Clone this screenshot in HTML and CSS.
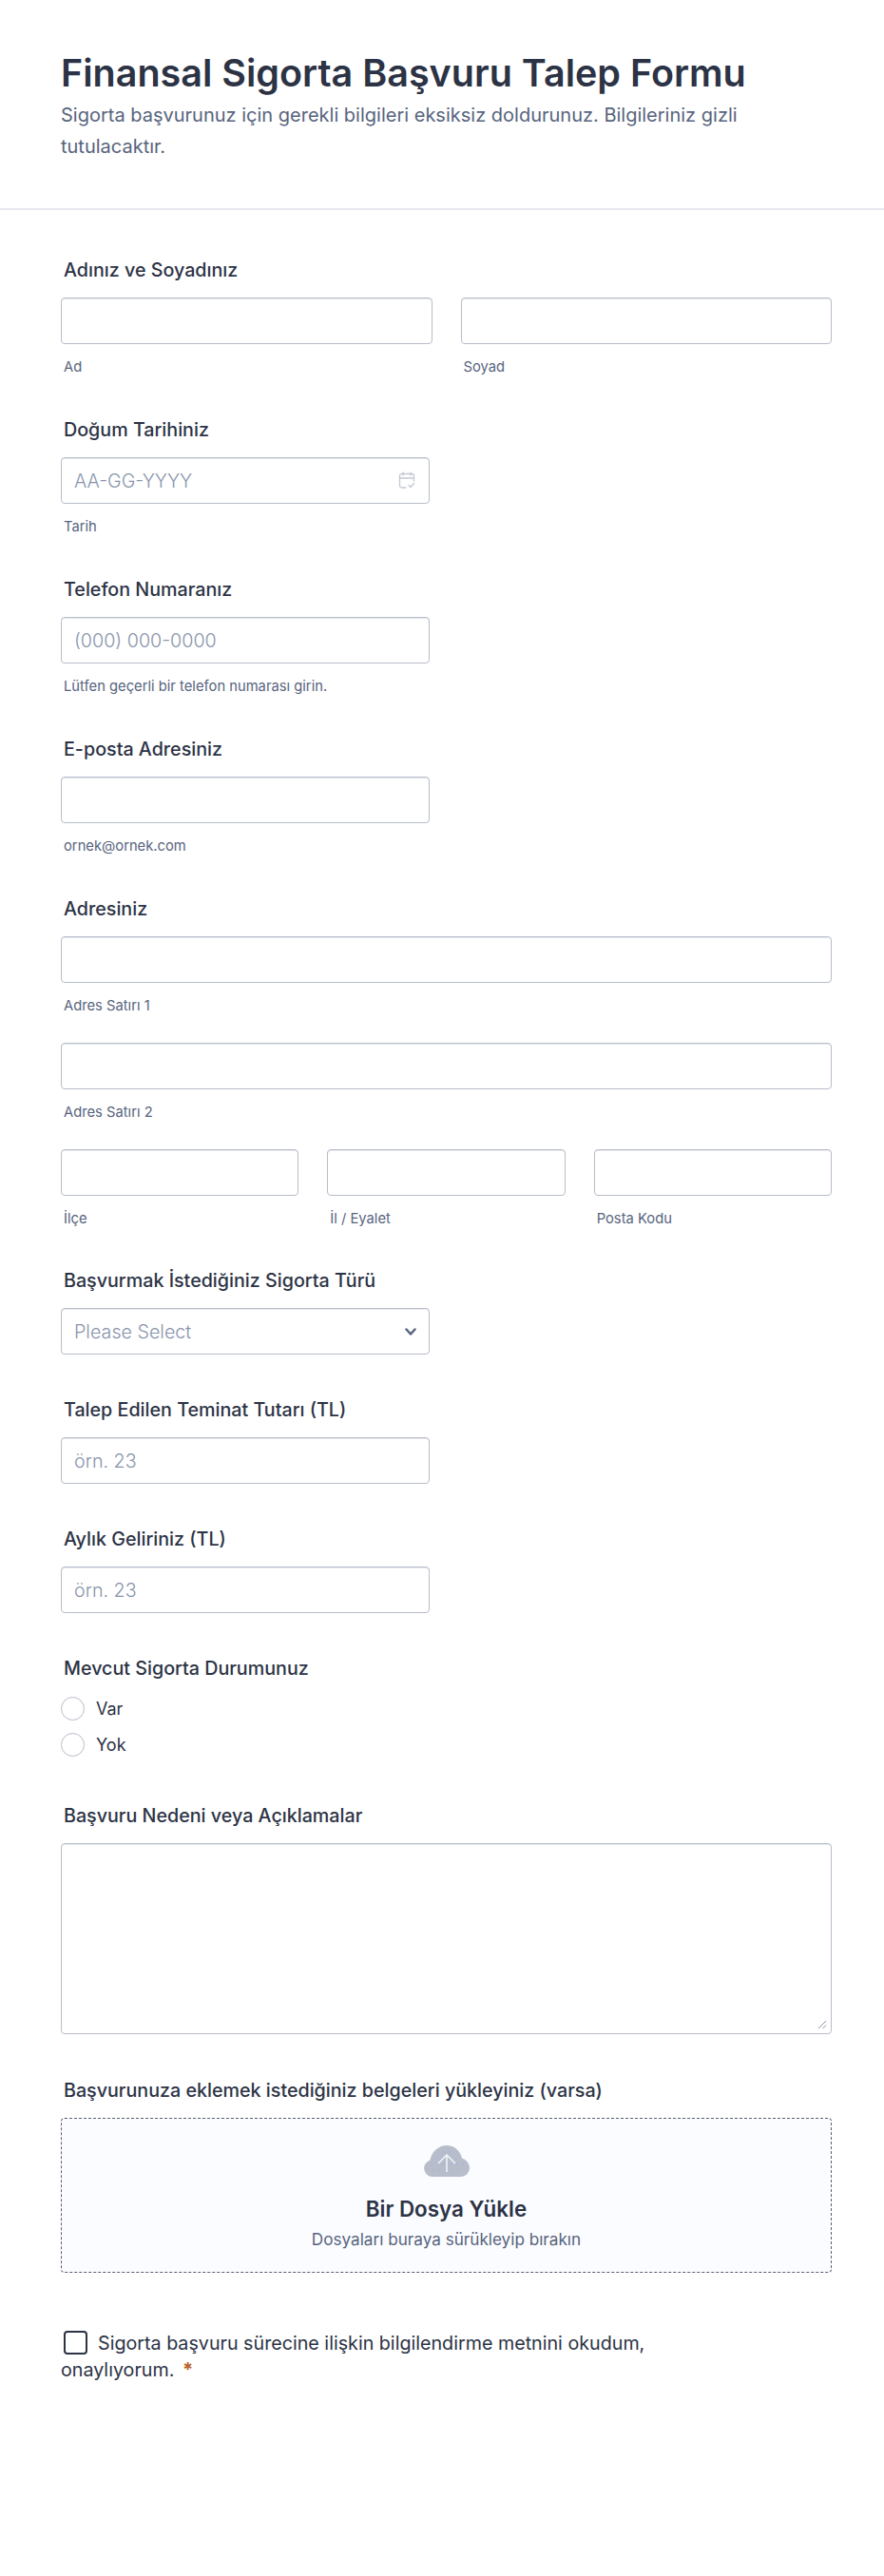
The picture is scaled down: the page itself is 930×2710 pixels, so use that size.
FILE: index.html
```html
<!DOCTYPE html>
<html lang="tr">
<head>
<meta charset="utf-8">
<title>Finansal Sigorta Başvuru Talep Formu</title>
<link rel="stylesheet" href="styles.css">
</head>
<body>
<header class="head">
  <h1 class="title">Finansal Sigorta Başvuru Talep Formu</h1>
  <p class="subtitle">Sigorta başvurunuz için gerekli bilgileri eksiksiz doldurunuz. Bilgileriniz gizli tutulacaktır.</p>
</header>
<main class="form">
  <section class="field">
    <div class="label">Adınız ve Soyadınız</div>
    <div class="row two">
      <div><div class="input"></div><div class="sub">Ad</div></div>
      <div><div class="input"></div><div class="sub">Soyad</div></div>
    </div>
  </section>
  <section class="field">
    <div class="label">Doğum Tarihiniz</div>
    <div class="input half ph">AA-GG-YYYY
      <svg class="cal" width="18" height="19" viewBox="0 0 18 19" fill="none" stroke="#c3c8d4" stroke-width="1.3" stroke-linecap="round" stroke-linejoin="round">
        <path d="M8 17H3.500A2 2 0 0 1 1.500 15V4.500A2 2 0 0 1 3.500 2.500H14.500A2 2 0 0 1 16.500 4.500V10"/>
        <path d="M1.500 7H16.500M5 1V4M13 1V4"/>
        <path d="M11 14.500L13 16.500L16.500 12.500"/>
      </svg>
    </div>
    <div class="sub">Tarih</div>
  </section>
  <section class="field">
    <div class="label">Telefon Numaranız</div>
    <div class="input half ph">(000) 000-0000</div>
    <div class="sub">Lütfen geçerli bir telefon numarası girin.</div>
  </section>
  <section class="field">
    <div class="label">E-posta Adresiniz</div>
    <div class="input half"></div>
    <div class="sub">ornek@ornek.com</div>
  </section>
  <section class="field address">
    <div class="label">Adresiniz</div>
    <div class="stack">
      <div><div class="input"></div><div class="sub">Adres Satırı 1</div></div>
      <div><div class="input"></div><div class="sub">Adres Satırı 2</div></div>
      <div class="row three">
        <div><div class="input"></div><div class="sub">İlçe</div></div>
        <div><div class="input"></div><div class="sub">İl / Eyalet</div></div>
        <div><div class="input"></div><div class="sub">Posta Kodu</div></div>
      </div>
    </div>
  </section>
  <section class="field plain">
    <div class="label">Başvurmak İstediğiniz Sigorta Türü</div>
    <div class="input half ph">Please Select
      <svg class="chev" width="12" height="8" viewBox="0 0 12 8" fill="none" stroke="#57647e" stroke-width="2.5" stroke-linecap="round" stroke-linejoin="round"><path d="M1.500 1.500L6 6.500L10.500 1.500"/></svg>
    </div>
  </section>
  <section class="field plain">
    <div class="label">Talep Edilen Teminat Tutarı (TL)</div>
    <div class="input half ph">örn. 23</div>
  </section>
  <section class="field plain">
    <div class="label">Aylık Geliriniz (TL)</div>
    <div class="input half ph">örn. 23</div>
  </section>
  <section class="field choices">
    <div class="label radio-label">Mevcut Sigorta Durumunuz</div>
    <div class="radio"><span class="dot"></span>Var</div>
    <div class="radio"><span class="dot"></span>Yok</div>
  </section>
  <section class="field notes">
    <div class="label">Başvuru Nedeni veya Açıklamalar</div>
    <div class="input area">
      <svg class="grip" width="10" height="10" viewBox="0 0 10 10" fill="none" stroke="#8c92a3" stroke-width="1"><path d="M1 9L9 1M5.500 9L9 5.500"/></svg>
    </div>
  </section>
  <section class="field">
    <div class="label">Başvurunuza eklemek istediğiniz belgeleri yükleyiniz (varsa)</div>
    <div class="upload">
      <svg class="cloud" width="48" height="33" viewBox="0 0 48 33">
        <path fill="#b8bdcb" d="M9 33A9 9 0 0 1 6.500 15.400C8 7 15 0 24 0C32 0 38.500 6 40 13.500C44.800 15 48 19 48 24A9 9 0 0 1 39 33Z"/>
        <path fill="none" stroke="#8fb4e0" stroke-width="1" stroke-linecap="round" stroke-dasharray="0.500 6" d="M8 20H42M10 26H40M14 14H36M20 7H30"/>
        <path fill="none" stroke="#f3f5fa" stroke-width="1.500" d="M24 28V10M15 19L24 10L33 19"/>
      </svg>
      <div class="up-title">Bir Dosya Yükle</div>
      <div class="up-sub">Dosyaları buraya sürükleyip bırakın</div>
    </div>
  </section>
  <section class="consent">
    <span class="box"></span>Sigorta başvuru sürecine ilişkin bilgilendirme metnini okudum, onaylıyorum. <span class="req">*</span>
  </section>
</main>
</body>
</html>
```
FILE: styles.css
```css
* { box-sizing: border-box; }
html, body { margin: 0; padding: 0; background: #fff; }
body { font-family: Inter, "Liberation Sans", sans-serif; color: #2c3345; height: 2710px; overflow: hidden; }
.head { height: 221px; padding: 51px 64px 0; border-bottom: 2px solid #e6e8f2; }
.title { margin: 0; font-size: 39.5px; line-height: 52px; font-weight: 600; color: #2c3345; }
.subtitle { margin: 2px 0 0; font-size: 20px; line-height: 33px; color: #57647e; width: 790px; }
.form { padding: 51px 55px 0 64px; }
.field { margin-bottom: 44px; }
.address { margin-bottom: 43px; }
.plain { margin-bottom: 46px; }
.choices { margin-bottom: 44px; }
.notes { margin-bottom: 47px; }
.label { font-size: 19.7px; line-height: 24px; font-weight: 500; margin: 0 0 17px 3px; color: #2c3345; }
.row { display: grid; }
.row.two { grid-template-columns: 1fr 1fr; gap: 30px; }
.row.three { grid-template-columns: repeat(3, 1fr); gap: 30px; }
.stack { display: flex; flex-direction: column; gap: 29px; }
.input { position: relative; height: 49px; border: 1px solid #b8bdc9; border-radius: 4px; background: #fff; box-shadow: inset 0 1px 0 #e6e8f0; }
.half { width: 388px; }
.ph { padding-left: 13px; font-size: 19.7px; line-height: 49px; color: #8894ab; font-weight: 300; }
.sub { margin: 14px 0 0 3px; font-size: 14.75px; line-height: 20px; color: #57647e; }
.cal { position: absolute; right: 14px; top: 14px; }
.chev { position: absolute; right: 13px; top: 20px; }
.radio-label { margin-bottom: 11px; }
.radio { display: flex; align-items: center; height: 38px; font-size: 18px; color: #2c3345; }
.dot { width: 25px; height: 25px; margin-right: 12px; border: 1.5px solid #b8bdc9; border-radius: 50%; background: #fff; }
.area { height: 201px; }
.grip { position: absolute; right: 4px; bottom: 4px; }
.upload { height: 163px; padding-top: 28px; background: #fbfcff; border: 1px dashed #5a5f75; border-radius: 4px; text-align: center; }
.cloud { display: block; margin: 0 auto; }
.up-title { margin-top: 20px; font-size: 22.4px; line-height: 28px; font-weight: 600; color: #2c3345; }
.up-sub { margin-top: 5px; font-size: 17.15px; line-height: 26px; color: #57647e; }
.consent { margin-top: 60px; width: 660px; font-size: 19.7px; line-height: 28px; color: #2c3345; }
.box { display: inline-block; width: 25px; height: 25px; margin: 0 11px 0 3px; vertical-align: -5px; border: 2px solid #2c3345; border-radius: 4px; background: #fff; }
.req { margin-left: 3px; font-weight: 700; font-size: 20px; line-height: 20px; color: #b8622a; }
```
